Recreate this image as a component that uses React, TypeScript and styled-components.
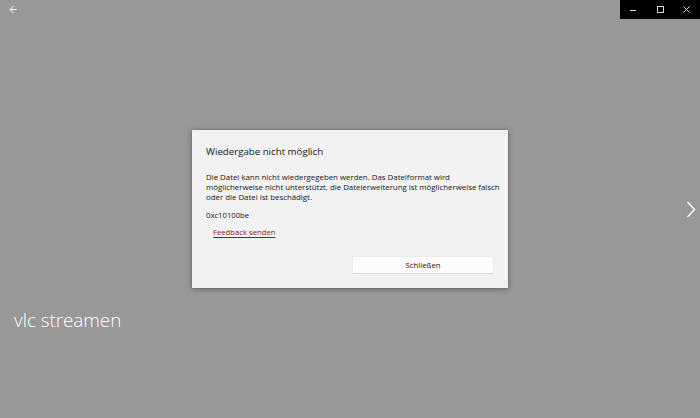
import React from 'react';
import styled, { createGlobalStyle } from 'styled-components';

const GlobalStyle = createGlobalStyle`
  html, body, #root {
    margin: 0;
    padding: 0;
    width: 100%;
    height: 100%;
  }
  body {
    font-family: 'Open Sans', 'Noto Sans', 'Liberation Sans', sans-serif;
    overflow: hidden;
  }
`;

const Stage = styled.div`
  position: relative;
  width: 700px;
  height: 418px;
  background: #989898;
  display: flex;
  flex-direction: column;
  overflow: hidden;
`;

const TopBar = styled.div`
  display: flex;
  justify-content: space-between;
  height: 19px;
`;

const BackButton = styled.button`
  width: 28px;
  height: 19px;
  border: none;
  background: transparent;
  padding: 0;
  color: #fff;
  display: flex;
  align-items: center;
  justify-content: flex-start;
  padding-left: 9px;
`;

const Caption = styled.div`
  display: flex;
  background: #000;
  width: 80px;
  height: 19px;
`;

const CaptionButton = styled.button`
  flex: 1;
  height: 100%;
  border: none;
  padding: 0;
  background: transparent;
  color: #d8d8d8;
  display: flex;
  align-items: center;
  justify-content: center;
`;

const MediaArea = styled.div`
  flex: 1;
  display: flex;
  align-items: flex-end;
  padding: 0 0 86px 14px;
`;

const MediaTitle = styled.div`
  font-weight: 300;
  font-size: 18.8px;
  line-height: 24px;
  color: #fff;
`;

const NextButton = styled.button`
  position: absolute;
  right: 3px;
  top: 200px;
  width: 12px;
  height: 19px;
  border: none;
  padding: 0;
  background: transparent;
  color: #fff;
  display: flex;
  align-items: center;
  justify-content: center;
`;

const Overlay = styled.div`
  position: absolute;
  inset: 0;
  display: flex;
  align-items: center;
  justify-content: center;
`;

const Dialog = styled.div`
  width: 316px;
  box-sizing: border-box;
  background: #f2f2f2;
  padding: 14px;
  box-shadow: 0 1px 6px rgba(0, 0, 0, 0.35), 0 0 1px rgba(0, 0, 0, 0.3);
  display: flex;
  flex-direction: column;
  color: #161616;
`;

const DialogTitle = styled.div`
  font-size: 9.7px;
  line-height: 16px;
  font-weight: 400;
`;

const DialogText = styled.p`
  margin: 12px 0 0;
  font-size: 7.85px;
  line-height: 10px;
  white-space: nowrap;
`;

const ErrorCode = styled.div`
  margin-top: 8px;
  font-size: 7.7px;
  line-height: 10px;
`;

const FeedbackLink = styled.a`
  margin: 7px 0 0 7px;
  align-self: flex-start;
  font-size: 7.7px;
  line-height: 10px;
  color: #8a1c24;
  text-decoration: underline;
  text-underline-offset: 1.5px;
`;

const Actions = styled.div`
  margin-top: 19px;
  display: flex;
  justify-content: flex-end;
`;

const CloseButton = styled.button`
  width: 142px;
  height: 18px;
  padding: 0;
  box-sizing: border-box;
  background: #fbfbfb;
  border: 1px solid #ececec;
  border-bottom-color: #d9d9d9;
  font-family: inherit;
  font-size: 7.8px;
  color: #161616;
`;

export default function App() {
  return (
    <>
      <GlobalStyle />
      <Stage>
        <TopBar>
          <BackButton aria-label="Zurück">
            <svg width="8" height="9" viewBox="0 0 8 9" fill="none" stroke="currentColor" strokeWidth="1">
              <path d="M7.5 4.5H1" />
              <path d="M4.5 1L1 4.5L4.5 8" />
            </svg>
          </BackButton>
          <Caption>
            <CaptionButton aria-label="Minimieren">
              <svg width="6" height="6" viewBox="0 0 6 6" stroke="currentColor" strokeWidth="1">
                <path d="M0 3.5H6" />
              </svg>
            </CaptionButton>
            <CaptionButton aria-label="Maximieren">
              <svg width="7" height="7" viewBox="0 0 7 7" fill="none" stroke="currentColor" strokeWidth="1">
                <rect x="0.5" y="0.5" width="6" height="6" />
              </svg>
            </CaptionButton>
            <CaptionButton aria-label="Schließen">
              <svg width="7" height="7" viewBox="0 0 7 7" fill="none" stroke="currentColor" strokeWidth="1">
                <path d="M0.5 0.5L6.5 6.5M6.5 0.5L0.5 6.5" />
              </svg>
            </CaptionButton>
          </Caption>
        </TopBar>
        <MediaArea>
          <MediaTitle>vlc streamen</MediaTitle>
        </MediaArea>
        <NextButton aria-label="Weiter">
          <svg width="10" height="17" viewBox="0 0 10 17" fill="none" stroke="currentColor" strokeWidth="1.4">
            <path d="M1.5 1L8.5 8.5L1.5 16" />
          </svg>
        </NextButton>
        <Overlay>
          <Dialog>
            <DialogTitle>Wiedergabe nicht möglich</DialogTitle>
            <DialogText>
              Die Datei kann nicht wiedergegeben werden. Das Dateiformat wird
              <br />
              möglicherweise nicht unterstützt, die Dateierweiterung ist möglicherweise falsch
              <br />
              oder die Datei ist beschädigt.
            </DialogText>
            <ErrorCode>0xc10100be</ErrorCode>
            <FeedbackLink href="#">Feedback senden</FeedbackLink>
            <Actions>
              <CloseButton>Schließen</CloseButton>
            </Actions>
          </Dialog>
        </Overlay>
      </Stage>
    </>
  );
}
